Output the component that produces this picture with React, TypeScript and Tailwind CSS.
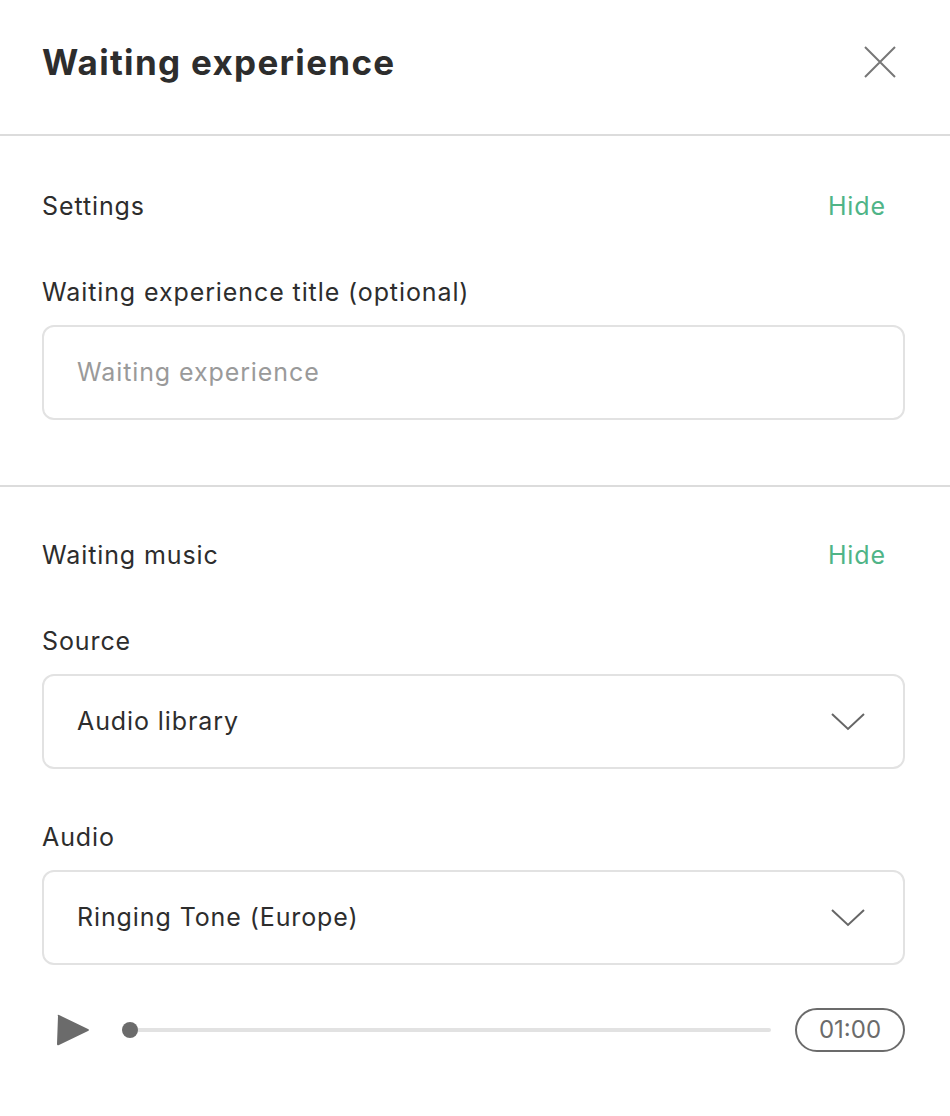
const SectionHead = ({title}: {title: string}) => (
  <div className="flex items-center justify-between">
    <span className="text-[25px] leading-[30px] tracking-[0.9px] text-[#2d2d2d]">{title}</span>
    <button className="pr-[19px] text-[25px] leading-[30px] tracking-[0.9px] text-[#4fb487]">Hide</button>
  </div>
);

const Label = ({children, className}: {children: string; className?: string}) => (
  <div className={`text-[25px] leading-[30px] tracking-[0.9px] text-[#2d2d2d] ${className ?? ''}`}>{children}</div>
);

const Select = ({value}: {value: string}) => (
  <div className="mt-[18px] flex h-[95px] items-center justify-between rounded-[12px] border-2 border-[#e2e2e2] pl-[33px] pr-[38px]">
    <span className="text-[25px] tracking-[0.9px] text-[#2d2d2d]">{value}</span>
    <svg width="34" height="20" viewBox="0 0 34 20" fill="none" stroke="#666" strokeWidth="2">
      <path d="M1 2 L17 17 L33 2" />
    </svg>
  </div>
);

const App = () => {
  return (
    <div className="min-h-[1116px] w-[950px] bg-white font-['Inter',sans-serif]">
      <header className="flex h-[136px] items-center justify-between border-b-2 border-[#dcdcdc] pb-[10px] pl-[42px] pr-[53px]">
        <h1 className="text-[35px] font-bold tracking-[1.3px] text-[#2d2d2d]">Waiting experience</h1>
        <svg width="34" height="34" viewBox="0 0 34 34" stroke="#777" strokeWidth="2">
          <path d="M2 2 L32 32 M32 2 L2 32" />
        </svg>
      </header>

      <section className="border-b-2 border-[#dcdcdc] pb-[65px] pl-[42px] pr-[45px] pt-[55px]">
        <SectionHead title="Settings" />
        <Label className="mt-[56px]">Waiting experience title (optional)</Label>
        <div className="mt-[18px] flex h-[95px] items-center rounded-[12px] border-2 border-[#e2e2e2] pl-[33px]">
          <span className="text-[25px] tracking-[0.9px] text-[#9a9a9a]">Waiting experience</span>
        </div>
      </section>

      <section className="pl-[42px] pr-[45px] pt-[53px]">
        <SectionHead title="Waiting music" />
        <Label className="mt-[56px]">Source</Label>
        <Select value="Audio library" />
        <Label className="mt-[53px]">Audio</Label>
        <Select value="Ringing Tone (Europe)" />

        <div className="mt-[43px] flex items-center">
          <svg width="36" height="34" viewBox="0 0 36 34" className="ml-[13px]">
            <path d="M3 3 Q2 1 4 2 L33 16 Q35 17 33 18 L4 32 Q2 33 2 31 Z" fill="#6b6b6b" />
          </svg>
          <div className="relative ml-[31px] flex h-[16px] flex-1 items-center">
            <div className="h-[4px] w-full rounded-full bg-[#e2e2e2]" />
            <div className="absolute left-0 h-[16px] w-[16px] rounded-full bg-[#6b6b6b]" />
          </div>
          <div className="ml-[24px] flex h-[44px] w-[110px] items-center justify-center rounded-full border-2 border-[#6b6b6b] text-[24px] text-[#6b6b6b]">
            01:00
          </div>
        </div>
      </section>
    </div>
  );
};

export default App;
